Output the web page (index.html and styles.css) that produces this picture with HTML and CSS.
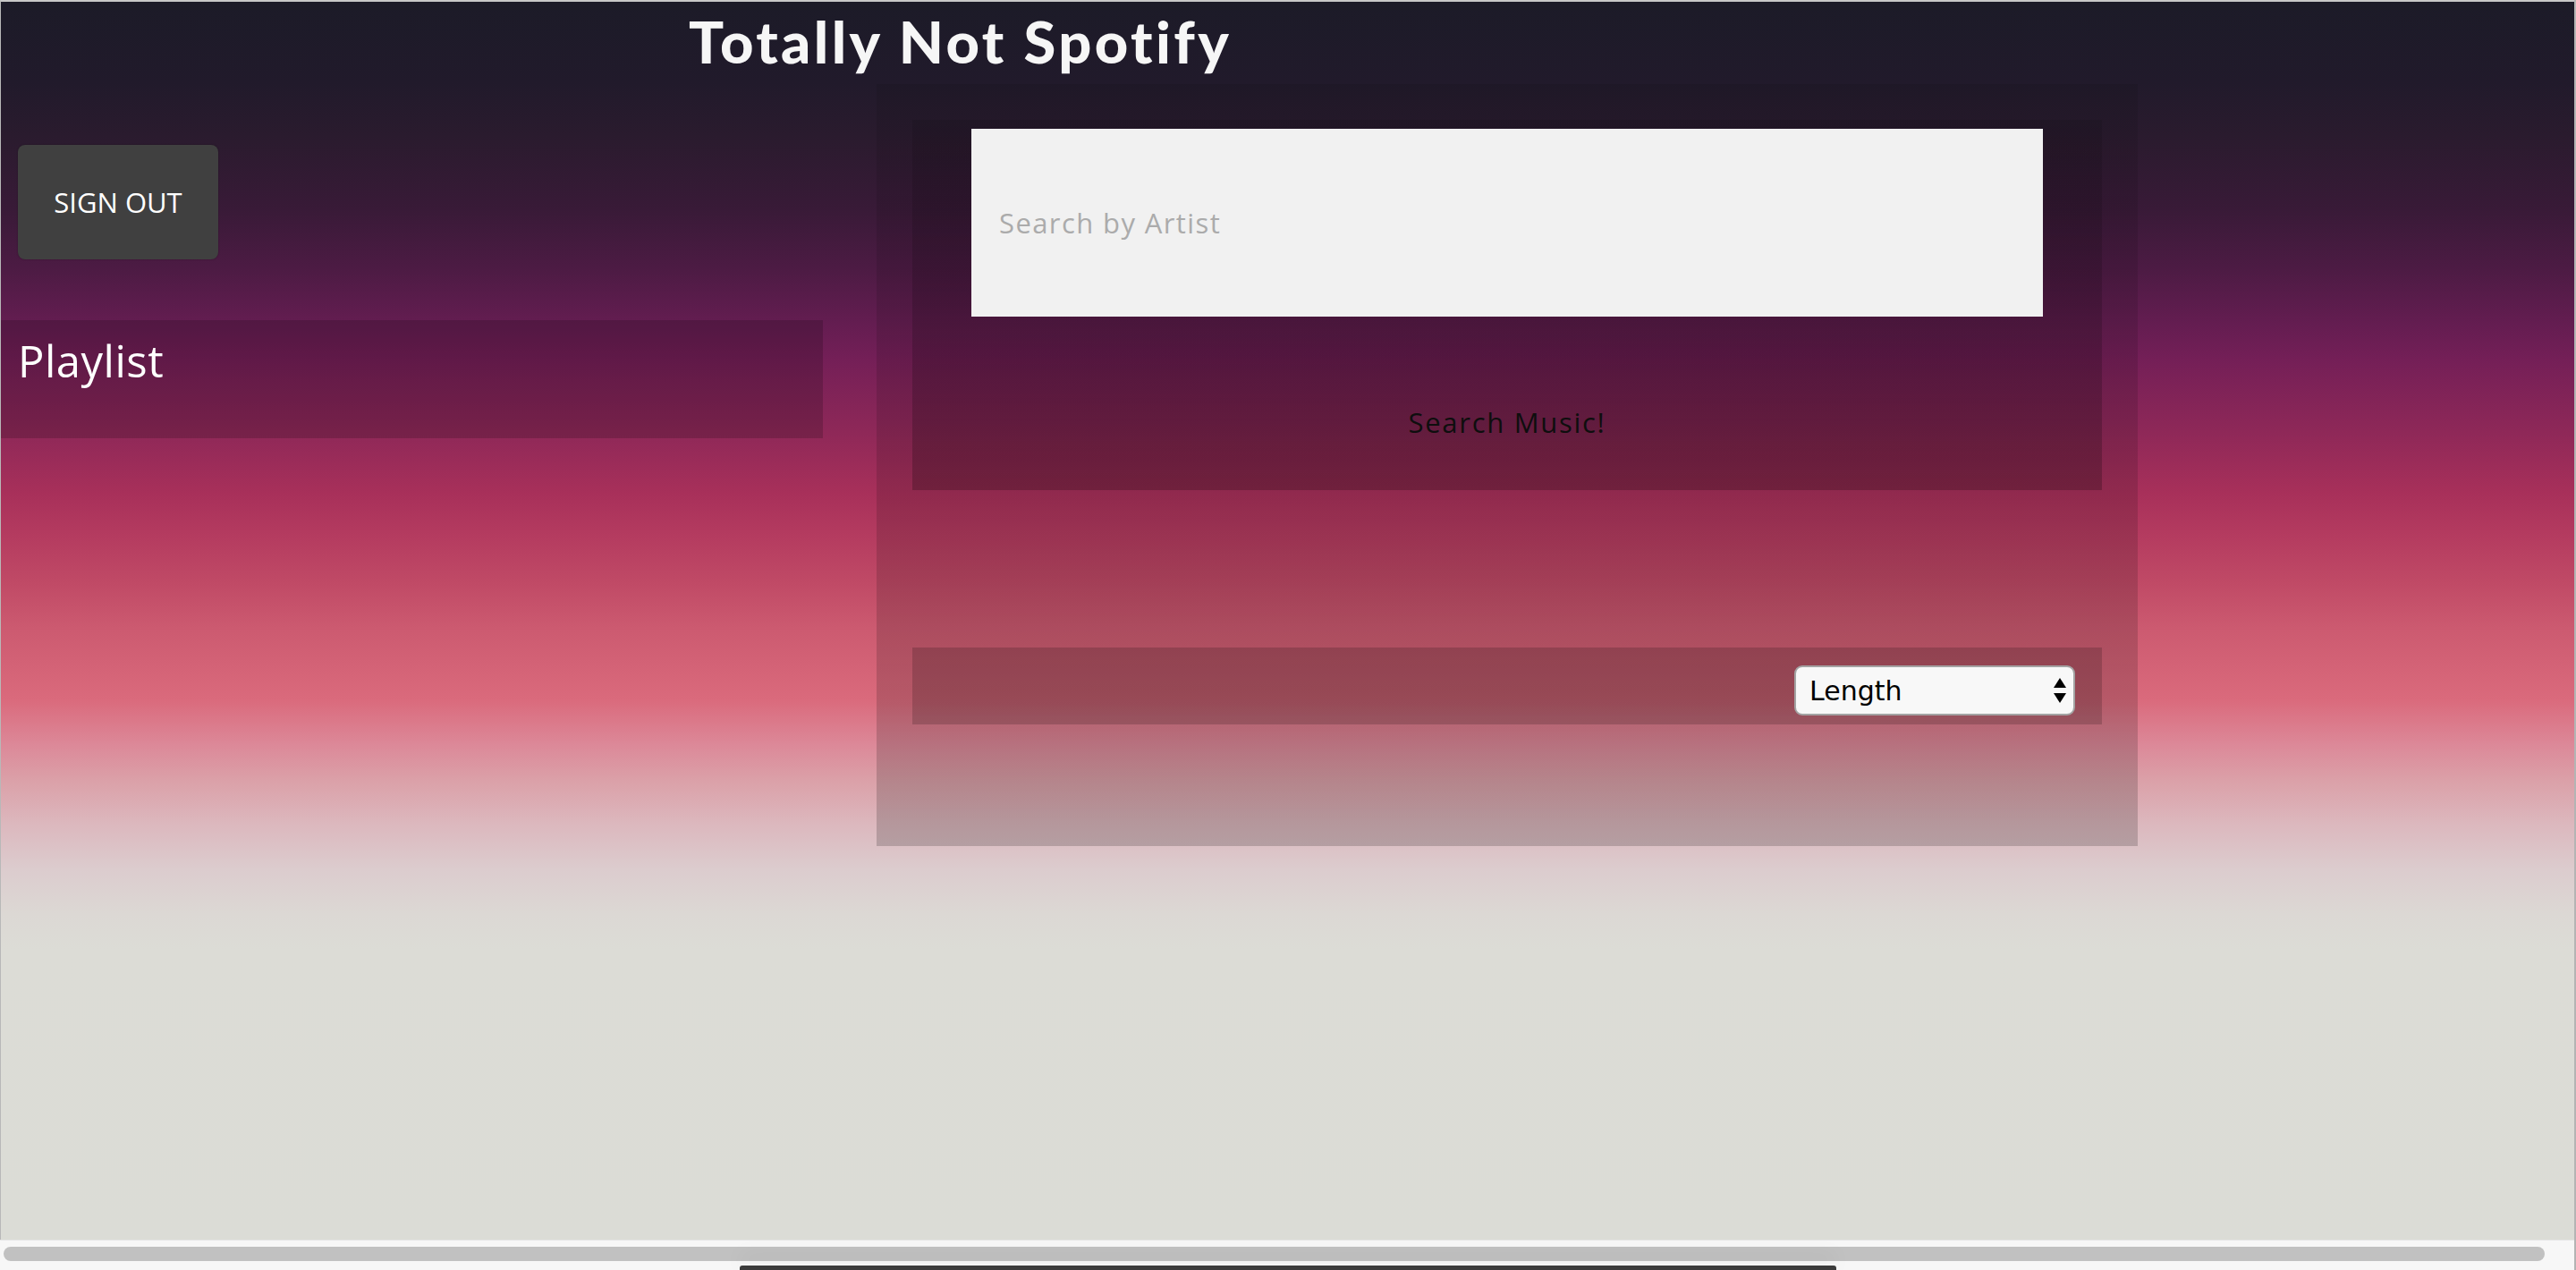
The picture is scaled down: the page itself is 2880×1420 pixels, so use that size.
FILE: index.html
```html
<!DOCTYPE html>
<html lang="en">
<head>
<meta charset="utf-8">
<title>Totally Not Spotify</title>
<link rel="stylesheet" href="styles.css">
</head>
<body>
<div class="window">
  <div class="page">
    <header class="header">
      <h1 class="title">Totally Not Spotify</h1>
    </header>
    <div class="layout">
      <aside class="sidebar">
        <button class="signout" type="button">SIGN OUT</button>
        <section class="playlist">
          <h2 class="playlist-title">Playlist</h2>
        </section>
      </aside>
      <main class="main">
        <div class="search-panel">
          <input class="search-input" type="text" placeholder="Search by Artist">
          <button class="search-btn" type="button">Search Music!</button>
        </div>
        <div class="sort-bar">
          <div class="select-wrap">
            <select class="sort-select">
              <option>Length</option>
            </select>
            <svg class="select-arrows" width="16" height="30" viewBox="0 0 16 30" aria-hidden="true">
              <path d="M8 1 L15 12 L1 12 Z" fill="#000"/>
              <path d="M1 18 L15 18 L8 29 Z" fill="#000"/>
            </svg>
          </div>
        </div>
      </main>
    </div>
  </div>
  <div class="hscroll">
    <div class="hscroll-thumb"></div>
    <div class="dock"></div>
  </div>
</div>
</body>
</html>
```
FILE: styles.css
```css
html, body {
  margin: 0;
  padding: 0;
  height: 100%;
}

body {
  font-family: "Open Sans", "Noto Sans", sans-serif;
  background: #f7f7f7;
  overflow: hidden;
}

.window {
  height: 100vh;
  display: flex;
  flex-direction: column;
  border-right: 2px solid #b4b4b4;
  box-sizing: border-box;
}

.page {
  flex: 1;
  border-top: 2px solid #c8c8c8;
  border-left: 1px solid #b8b8b8;
  background: linear-gradient(to bottom,
    #1c1b28 0px,
    #211a2b 90px,
    #2a1b2e 150px,
    #381a37 230px,
    #4d1b44 300px,
    #641d51 360px,
    #741f57 400px,
    #8e2858 480px,
    #a8305a 550px,
    #b53c60 600px,
    #c04a66 650px,
    #cc5a70 700px,
    #da6a7c 780px,
    #dc8898 830px,
    #dba0a8 870px,
    #dcb8be 920px,
    #dcccce 970px,
    #dcd8d4 1020px,
    #dcdcd6 1060px,
    #dbdcd6 1386px);
}

.header {
  height: 92px;
  box-sizing: border-box;
  padding: 5px 0 0 769px;
}

.title {
  margin: 0;
  font-family: "Lato", "DejaVu Sans", sans-serif;
  font-weight: 900;
  font-size: 65px;
  line-height: 1.2;
  color: #f6f6f6;
  letter-spacing: 3.4px;
}

.layout {
  display: grid;
  grid-template-columns: 919px 1410px;
  column-gap: 60px;
  align-items: start;
}

.sidebar {
  padding-top: 68px;
  display: flex;
  flex-direction: column;
  align-items: flex-start;
}

.signout {
  margin-left: 19px;
  width: 224px;
  height: 128px;
  border: none;
  border-radius: 8px;
  background: #404040;
  color: #ffffff;
  font-family: "Open Sans", "Noto Sans", sans-serif;
  font-size: 31px;
  box-shadow: 0 0 2px rgba(0, 0, 0, 0.35);
  cursor: pointer;
}

.playlist {
  margin-top: 68px;
  align-self: stretch;
  height: 132px;
  box-sizing: border-box;
  background: rgba(0, 0, 0, 0.17);
  padding: 14px 0 0 19px;
}

.playlist-title {
  margin: 0;
  font-weight: 400;
  font-size: 49px;
  line-height: 1.3;
  letter-spacing: 0.5px;
  color: #ffffff;
}

.main {
  background: linear-gradient(to bottom, rgba(0, 0, 0, 0.09), rgba(0, 0, 0, 0.18));
  padding: 40px 40px 136px;
  box-sizing: border-box;
}

.search-panel {
  background: linear-gradient(to bottom, rgba(0, 0, 0, 0.1), rgba(0, 0, 0, 0.22));
  padding: 10px 0 36px;
  display: flex;
  flex-direction: column;
  align-items: center;
}

.search-input {
  width: 1198px;
  height: 210px;
  box-sizing: border-box;
  border: none;
  background: #f1f1f1;
  padding: 0 0 0 31px;
  font-family: "Open Sans", "Noto Sans", sans-serif;
  font-size: 31px;
  letter-spacing: 1.4px;
  color: #222;
  outline: none;
}

.search-input::placeholder {
  color: #ababab;
}

.search-btn {
  margin-top: 78px;
  height: 80px;
  padding: 0 20px;
  border: none;
  background: transparent;
  color: #0e0e0e;
  font-family: "Open Sans", "Noto Sans", sans-serif;
  font-size: 31px;
  letter-spacing: 1.7px;
  cursor: pointer;
}

.sort-bar {
  margin-top: 176px;
  height: 86px;
  box-sizing: border-box;
  background: rgba(0, 0, 0, 0.17);
  padding: 20px 30px 10px;
  display: flex;
  justify-content: flex-end;
  align-items: flex-start;
}

.select-wrap {
  position: relative;
  width: 314px;
  height: 56px;
}

.sort-select {
  appearance: none;
  -webkit-appearance: none;
  width: 100%;
  height: 100%;
  box-sizing: border-box;
  border: 2px solid #a3a3a3;
  border-radius: 9px;
  background: #f8f8f8;
  padding: 0 0 0 15px;
  font-family: "DejaVu Sans", sans-serif;
  font-size: 30px;
  color: #000;
}

.select-arrows {
  position: absolute;
  right: 9px;
  top: 13px;
  pointer-events: none;
}

.hscroll {
  position: relative;
  height: 34px;
  flex: none;
  background: #f7f7f7;
  border-top: 1px solid #e4e4e4;
  box-sizing: border-box;
  padding: 7px 33px 0 4px;
}

.hscroll-thumb {
  height: 16px;
  border-radius: 8px;
  background: #c1c1c1;
}

.dock {
  position: absolute;
  left: 827px;
  bottom: 0;
  width: 1226px;
  height: 5px;
  background: #3b3b3b;
  border-radius: 3px 3px 0 0;
  box-shadow: 0 -8px 24px rgba(0, 0, 0, 0.12);
}
```
